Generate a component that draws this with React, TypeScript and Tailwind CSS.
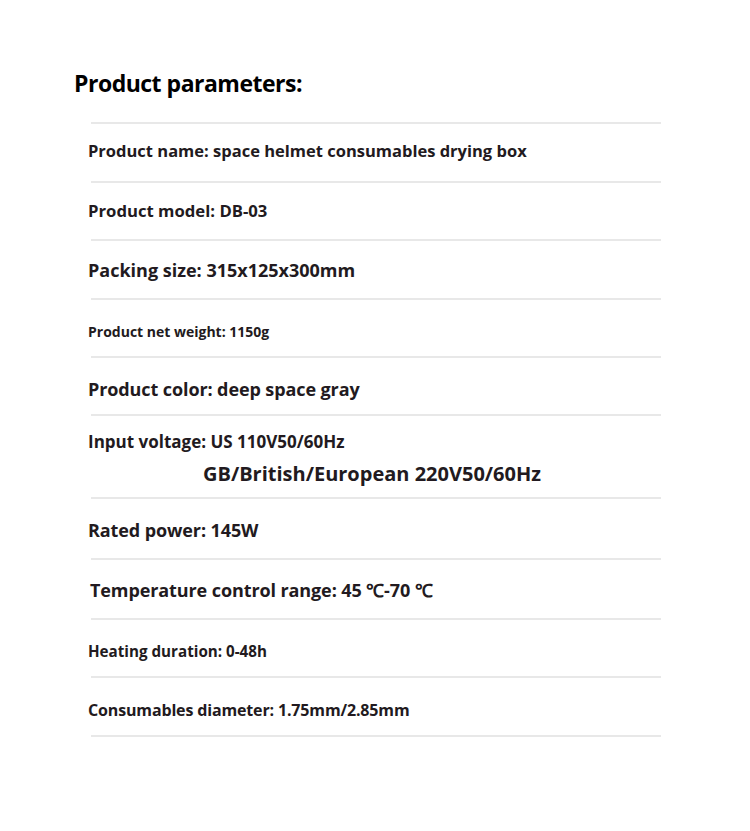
import { FunctionComponent } from "react";

type Row = {
  lines: { text: string; cls: string }[];
  h: string;
};

const ROWS: Row[] = [
  { h: "h-[57px] pb-[3px]", lines: [{ text: "Product name: space helmet consumables drying box", cls: "text-[16.5px]" }] },
  { h: "h-[56px]", lines: [{ text: "Product model: DB-03", cls: "text-[16.7px]" }] },
  { h: "h-[57px]", lines: [{ text: "Packing size: 315x125x300mm", cls: "text-[18px]" }] },
  { h: "h-[56px] pt-[7px]", lines: [{ text: "Product net weight: 1150g", cls: "text-[14px]" }] },
  { h: "h-[56px] pt-[6px]", lines: [{ text: "Product color: deep space gray", cls: "text-[18px] tracking-[-0.1px]" }] },
  {
    h: "h-[81px] pt-[2px]",
    lines: [
      { text: "Input voltage: US 110V50/60Hz", cls: "text-[17px]" },
      { text: "GB/British/European 220V50/60Hz", cls: "text-[20px] pl-[115px]" },
    ],
  },
  { h: "h-[59px] pt-[3px]", lines: [{ text: "Rated power: 145W", cls: "text-[18px] tracking-[-0.1px]" }] },
  { h: "h-[58px] pt-[2px]", lines: [{ text: "Temperature control range: 45 ℃-70 ℃", cls: "text-[18px] tracking-[-0.1px] pl-[2px]" }] },
  { h: "h-[56px] pt-[5px]", lines: [{ text: "Heating duration: 0-48h", cls: "text-[15.2px]" }] },
  { h: "h-[57px] pt-[6px]", lines: [{ text: "Consumables diameter: 1.75mm/2.85mm", cls: "text-[16px] tracking-[-0.15px]" }] },
];

const Divider = () => <div className="ml-[3px] h-[2px] w-[570px] bg-[#e8e8e8]" />;

const App: FunctionComponent = () => {
  return (
    <div
      className="min-h-[831px] w-[750px] bg-white pt-[66px]"
      style={{ fontFamily: '"Open Sans", "Liberation Sans", sans-serif' }}
    >
      <h1 className="pl-[74px] text-[23px] font-bold leading-[34px] tracking-[-0.5px] text-black">
        Product parameters:
      </h1>
      <div className="mt-[22px] pl-[88px]">
        <Divider />
        {ROWS.map((row, i) => (
          <div key={i}>
            <div className={`flex flex-col justify-center ${row.h}`}>
              {row.lines.map((l, j) => (
                <p key={j} className={`font-bold leading-[32px] text-[#221a20] ${l.cls}`}>
                  {l.text}
                </p>
              ))}
            </div>
            <Divider />
          </div>
        ))}
      </div>
    </div>
  );
};

export default App;
